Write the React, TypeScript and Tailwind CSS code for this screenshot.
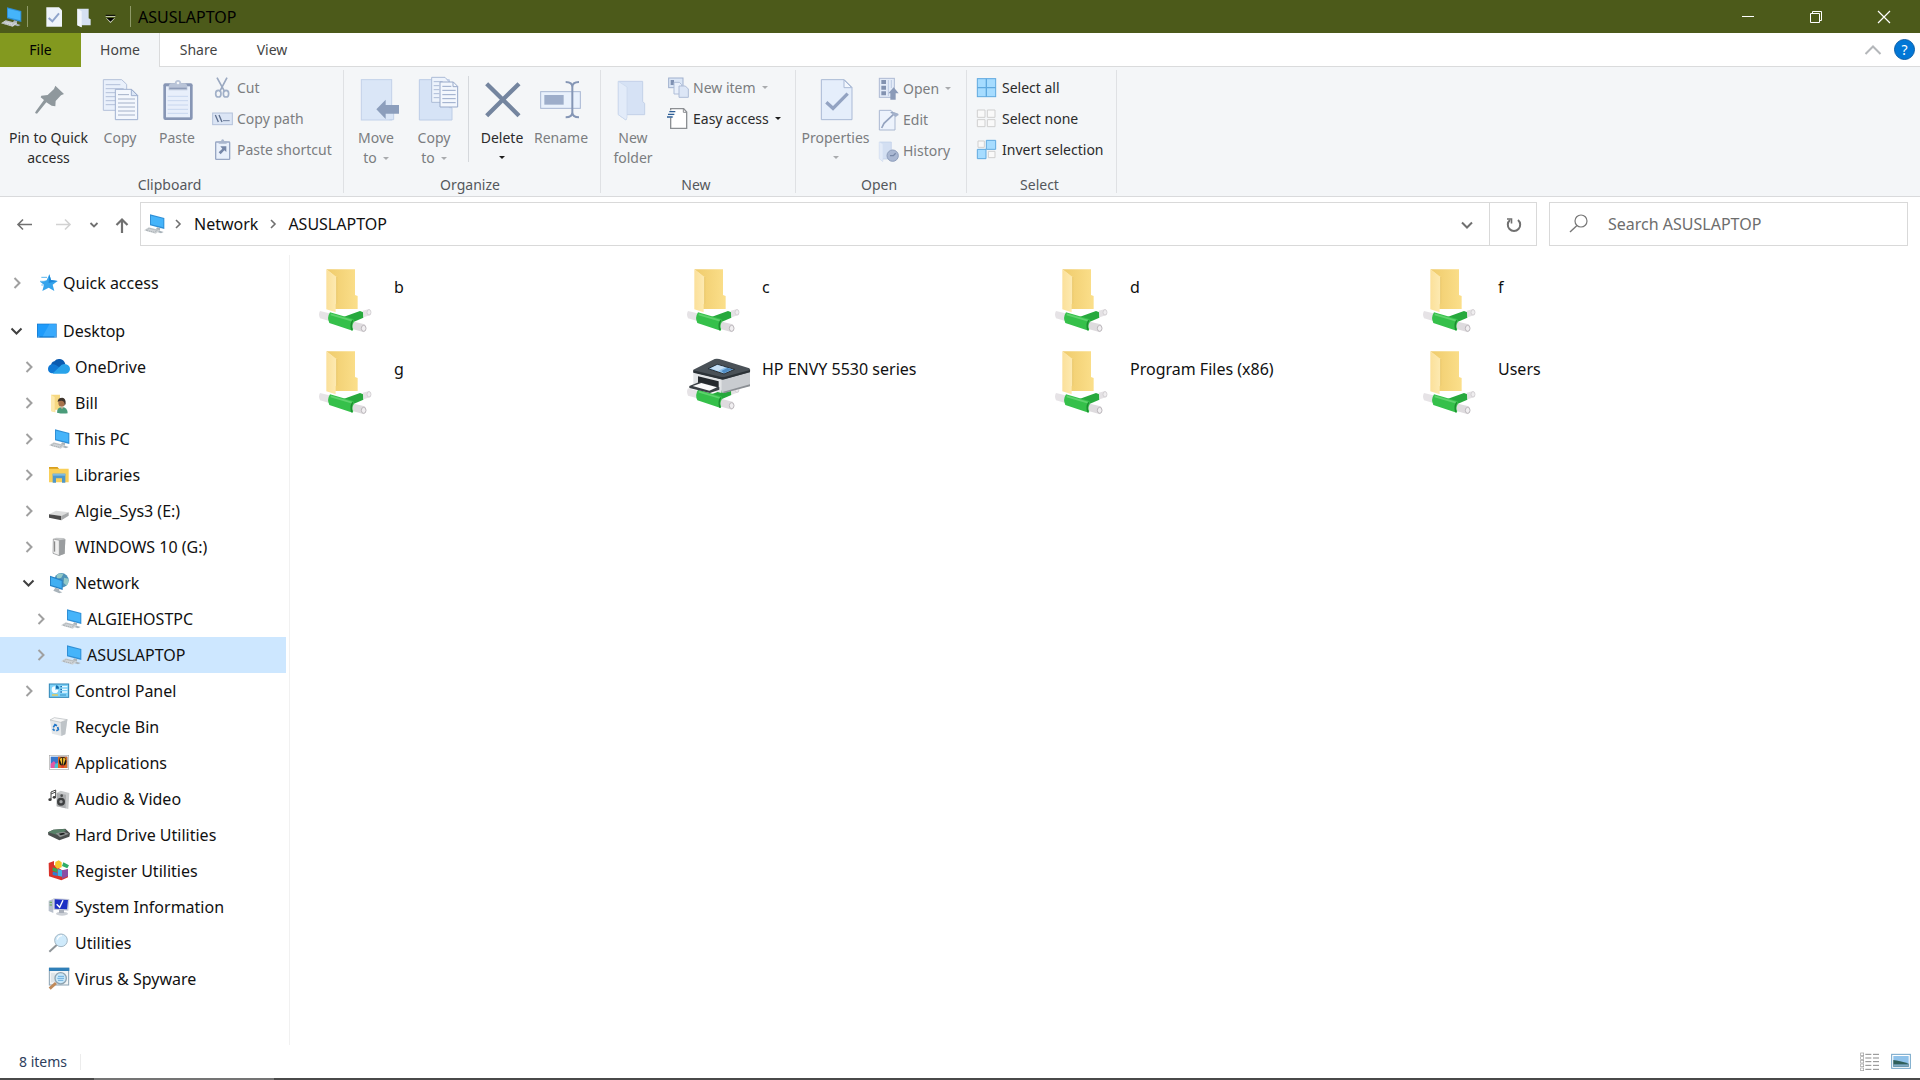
import type { ReactNode } from "react";

type Box = { vb: string; className?: string; children: ReactNode };

function Svg({ vb, className = "h-[22px] w-[22px]", children }: Box) {
  return (
    <svg viewBox={vb} className={`${className} shrink-0 overflow-visible`} fill="none" aria-hidden="true">
      {children}
    </svg>
  );
}

const BIG = "h-[42px] w-[42px]";

/* ---------- shared icons ---------- */

function ComputerIcon() {
  return (
    <Svg vb="144 505 66 66">
      <path d="M165 509 L208 520 V553 L165 542 Z" fill="#2f8fd6" />
      <path d="M168 513 L205 522 V548 L168 539 Z" fill="#45b4fa" />
      <path d="M186 548 L196 551 L194 558 L206 562 L198 566 L180 560 Z" fill="#a9b3ba" />
      <path d="M147 557 L161 548 L196 557 L182 567 Z" fill="#cfd3d6" />
      <path d="M153 557 L163 551 L187 557 L179 563 Z" stroke="#979ea3" strokeWidth="2" strokeDasharray="4 2" />
    </Svg>
  );
}

function Chevron({ open = false }: { open?: boolean }) {
  return (
    <svg viewBox="0 0 20 20" className="h-5 w-5 shrink-0" fill="none" aria-hidden="true">
      {open ? (
        <path d="M4.500 7.500 L9.500 12.500 L14.500 7.500" stroke="#404040" strokeWidth="2" />
      ) : (
        <path d="M7.500 5 L12.500 10 L7.500 15" stroke="#a0a0a0" strokeWidth="2" />
      )}
    </svg>
  );
}

function Caret({ dark = false }: { dark?: boolean }) {
  return (
    <svg viewBox="0 0 6 3" className="h-[3px] w-[6px] shrink-0" aria-hidden="true">
      <path d="M0 0 H6 L3 3 Z" fill={dark ? "#1c1c1c" : "#a9abae"} />
    </svg>
  );
}

/* ---------- ribbon icons ---------- */

const PinIcon = () => (
  <Svg vb="81 234 126 126" className={BIG}>
    <path d="M163 254 L189 279 L180 283 L164 300 L163 316 L152 314 L136 304 L108 338 L102 336 L105 330 L129 297 L119 289 L121 284 L140 282 L159 264 Z" fill="#8f989d" />
  </Svg>
);
const CopyIcon = () => (
  <Svg vb="294 234 126 126" className={BIG}>
    <path d="M307 236 H362 L377 250 V328 H307 Z" fill="#e9f0fb" stroke="#b4c1da" strokeWidth="3" />
    <path d="M314 251 H358 M314 263 H368 M314 275 H345 M314 287 H345 M314 299 H345 M314 311 H345" stroke="#b4c1da" strokeWidth="3" />
    <path d="M343 265 H392 L410 283 V356 H343 Z" fill="#f3f7fd" stroke="#9fb0cf" strokeWidth="3" />
    <path d="M391 265 V284 H410 Z" fill="#dbe6f6" stroke="#9fb0cf" strokeWidth="3" />
    <path d="M351 281 H384 M351 294 H402 M351 306 H402 M351 318 H402 M351 330 H402 M351 342 H402" stroke="#a3b0c8" strokeWidth="3" />
  </Svg>
);
const PasteIcon = () => (
  <Svg vb="468 234 126 126" className={BIG}>
    <rect x="490" y="247" width="88" height="110" rx="6" fill="#8796b5" />
    <rect x="498" y="256" width="72" height="93" fill="#e8effb" />
    <path d="M503 286 H564 M503 299 H564 M503 312 H564 M503 325 H564 M503 337 H564" stroke="#c8d6ee" strokeWidth="3" />
    <path d="M506 258 Q506 247 516 247 H524 Q526 237 534 237 Q542 237 544 247 H552 Q562 247 562 258 V268 H506 Z" fill="#b9c4d8" />
    <circle cx="534" cy="246" r="4" fill="#f4f6f8" />
    <path d="M508 262 H560" stroke="#8e9cb8" strokeWidth="4" />
  </Svg>
);
const CutIcon = () => (
  <Svg vb="633 231 66 66">
    <path d="M651 233 L674 275 M681 233 L659 275" stroke="#9aa8c0" strokeWidth="5" />
    <ellipse cx="655" cy="281" rx="8" ry="10" stroke="#a1b0c8" strokeWidth="5" />
    <ellipse cx="678" cy="281" rx="8" ry="10" stroke="#a1b0c8" strokeWidth="5" />
  </Svg>
);
const CopyPathIcon = () => (
  <Svg vb="633 324 66 66">
    <rect x="638" y="339" width="59" height="35" fill="#dbe5f5" stroke="#b3c1da" strokeWidth="3" />
    <path d="M646 345 L655 366 M657 345 L666 366" stroke="#5f708f" strokeWidth="4" />
    <path d="M669 362 H689" stroke="#6f7f9d" strokeWidth="3" />
  </Svg>
);
const PasteShortcutIcon = () => (
  <Svg vb="633 417 66 66">
    <rect x="647" y="426" width="42" height="52" rx="2" fill="#e9f0fb" stroke="#98a7c4" strokeWidth="4" />
    <path d="M656 431 V424 H663 Q664 418 668 418 Q672 418 673 424 H680 V431 Z" fill="#a9b6ce" />
    <path d="M661 439 H679 V456 L673 451 L662 463 L656 457 L667 446 Z" fill="#7687a8" />
  </Svg>
);
const MoveIcon = () => (
  <Svg vb="45 54 126 126" className={BIG}>
    <rect x="64" y="56" width="91" height="121" fill="#dae6f7" stroke="#c2d1e9" strokeWidth="3" />
    <path d="M148 140 H161 V176 H148" fill="#dae6f7" stroke="#c2d1e9" strokeWidth="3" />
    <path d="M109 145 L137 116 V132 H177 V158 H137 V174 Z" fill="#8c9ebc" />
  </Svg>
);
const CopyToIcon = () => (
  <Svg vb="219 54 126 126" className={BIG}>
    <path d="M238 56 H328 V140 H336 V177 H238 Z" fill="#d6e3f6" stroke="#bccce6" strokeWidth="3" />
    <path d="M275 49 H315 L327 62 V124 H275 Z" fill="#edf3fc" stroke="#adbcd7" strokeWidth="3" />
    <path d="M281 62 H308 M281 74 H298 M281 86 H298 M281 98 H298 M281 110 H298" stroke="#adbcd7" strokeWidth="3" />
    <path d="M300 63 H340 L353 76 V138 H300 Z" fill="#f3f7fd" stroke="#98a9c9" strokeWidth="3" />
    <path d="M339 63 V77 H353" stroke="#98a9c9" strokeWidth="3" />
    <path d="M307 76 H334 M307 88 H347 M307 101 H347 M307 113 H347 M307 125 H347" stroke="#98a9c9" strokeWidth="3" />
  </Svg>
);
const DeleteIcon = () => (
  <Svg vb="423 54 126 126" className={BIG}>
    <path d="M440 68 L537 164 M537 68 L440 164" stroke="#74859f" strokeWidth="13" />
  </Svg>
);
const RenameIcon = () => (
  <Svg vb="600 54 126 126" className={BIG}>
    <rect x="602" y="92" width="119" height="50" fill="#e9f1fc" stroke="#a7b7d3" strokeWidth="3" />
    <rect x="613" y="102" width="58" height="29" fill="#9dadca" />
    <path d="M677 63 Q697 63 697 78 V154 Q697 169 677 169 M717 63 Q697 63 697 78 M697 154 Q697 169 717 169" stroke="#8596b5" strokeWidth="6" />
  </Svg>
);
const NewFolderIcon = () => (
  <Svg vb="816 54 126 126" className={BIG}>
    <path d="M835 61 H908 V122 L914 127 V161 H858 V177 L835 161 Z" fill="#d6e2f5" stroke="#c3d1e8" strokeWidth="3" />
    <path d="M835 61 L861 78 V170 L858 177 L835 161 Z" fill="#e2ebf9" stroke="#c9d6ec" strokeWidth="2" />
  </Svg>
);
const NewItemIcon = () => (
  <Svg vb="981 51 66 66">
    <rect x="986" y="54" width="43" height="29" fill="#dbe6f6" stroke="#9fb0cd" strokeWidth="3" />
    <rect x="992" y="60" width="10" height="15" fill="#7f91b2" />
    <path d="M1002 67 H1018 L1025 74 V102 H1002 Z" fill="#e9f0fb" stroke="#afbed8" strokeWidth="3" />
    <path d="M1017 78 H1036 L1045 87 V112 H1017 Z" fill="#dce6f6" stroke="#aebcd6" strokeWidth="3" />
  </Svg>
);
const EasyAccessIcon = () => (
  <Svg vb="981 144 66 66">
    <path d="M992 146 H1031 L1040 156 V205 H992 Z" fill="#fff" stroke="#8c8f93" strokeWidth="4" />
    <path d="M1030 146 V157 H1040" stroke="#8c8f93" strokeWidth="3" />
    <rect x="983" y="151" width="18" height="22" fill="#f4f6f8" />
    <path d="M988 155 H1006 M984 163 H1003 M981 171 H998" stroke="#2e5f96" strokeWidth="4" />
  </Svg>
);
const PropertiesIcon = () => (
  <Svg vb="102 54 126 126" className={BIG}>
    <path d="M121 56 H190 L213 79 V176 H121 Z" fill="#e5eefb" stroke="#a9b9d5" strokeWidth="3" />
    <path d="M189 57 V80 H212 Z" fill="#f3f7fd" stroke="#a9b9d5" strokeWidth="3" />
    <path d="M136 124 L156 142 L200 98" stroke="#93a3c2" strokeWidth="10" />
  </Svg>
);
const OpenIcon = () => (
  <Svg vb="291 54 66 66">
    <rect x="298" y="55" width="45" height="57" fill="#e3ebf8" stroke="#adbad3" strokeWidth="3" />
    <path d="M304 60 H318 V72 H304 Z M304 77 H318 V89 H304 Z M304 94 H318 V106 H304 Z" fill="#8292b0" />
    <path d="M325 60 V108 M334 60 V84" stroke="#bccae2" strokeWidth="3" />
    <path d="M341 82 L356 100 H347 V119 H331 V100 H325 Z" fill="#8a9ab8" />
  </Svg>
);
const EditIcon = () => (
  <Svg vb="291 148 66 66">
    <path d="M298 152 H333 L345 164 V211 H298 Z" fill="#edf3fc" stroke="#a9b7d0" strokeWidth="3" />
    <path d="M305 205 L312 191 L343 162 M332 158 L355 166" stroke="#94a3bf" strokeWidth="5" />
    <path d="M341 157 L355 162 L348 173 L337 164 Z" fill="#a3b1ca" />
  </Svg>
);
const HistoryIcon = () => (
  <Svg vb="291 241 66 66">
    <path d="M298 247 H334 V298 H308 V305 L298 297 Z" fill="#d3dff2" stroke="#c0cfe8" strokeWidth="2" />
    <path d="M298 247 L308 254 V305 L298 297 Z" fill="#e3ebf8" />
    <circle cx="338" cy="288" r="17" fill="#a9b7d2" stroke="#8d9dbb" strokeWidth="3" />
    <path d="M330 288 H340 L347 281" stroke="#7788a8" strokeWidth="4" />
  </Svg>
);
const SelectAllIcon = () => (
  <Svg vb="588 51 66 66">
    <rect x="592" y="56" width="55" height="54" fill="#a6dcff" stroke="#5fa9df" strokeWidth="3" />
    <path d="M619 56 V110 M592 83 H647" stroke="#5fa9df" strokeWidth="4" />
  </Svg>
);
const SelectNoneIcon = () => (
  <Svg vb="588 144 66 66">
    <path d="M592 150 H615 V172 H592 Z M622 150 H645 V172 H622 Z M592 179 H615 V200 H592 Z M622 179 H645 V200 H622 Z" fill="#f9f9f9" stroke="#cfcfcf" strokeWidth="3" />
  </Svg>
);
const InvertIcon = () => (
  <Svg vb="588 237 66 66">
    <path d="M594 243 H613 V262 H594 Z M625 274 H645 V293 H625 Z" fill="#f9f9f9" stroke="#cfcfcf" strokeWidth="3" />
    <path d="M619 241 H647 V268 H619 Z M592 268 H618 V296 H592 Z" fill="#a6dcff" stroke="#5fa9df" strokeWidth="3" />
  </Svg>
);

/* ---------- navigation icons ---------- */

const StarIcon = () => (
  <Svg vb="108 37 66 66">
    <path d="M148 44 L153 61 L173 64 L158 75 L163 94 L146 84 L127 94 L132 75 L121 67 L140 62 Z" fill="#35a4ec" />
    <path d="M124 53 H141 M120 65 H134 M124 76 H131" stroke="#5db6ee" strokeWidth="3" />
    <path d="M148 44 L146 70 L173 64 L153 61 Z" fill="#1d87d8" />
  </Svg>
);
const DesktopIcon = () => (
  <Svg vb="108 181 66 66">
    <rect x="111" y="192" width="59" height="42" fill="#1677c8" />
    <rect x="113" y="194" width="55" height="36" fill="#1e9bfb" />
    <path d="M148 194 H168 V230 H128 Z" fill="#38a9fc" />
    <path d="M113 232 H168" stroke="#bfe0f8" strokeWidth="2" strokeDasharray="5 45" />
  </Svg>
);
const OneDriveIcon = () => (
  <Svg vb="144 289 66 66">
    <path d="M153 320 Q153 307 163 305 Q170 296 180 298 Q192 300 196 313 L176 332 Z" fill="#0a5bb0" />
    <path d="M155 341 Q144 338 144 327 Q145 316 156 314 Q165 312 171 318 L196 335 Z" fill="#0f78d4" />
    <path d="M178 322 Q186 311 198 314 Q210 317 210 329 Q209 341 197 342 H157 Z" fill="#29a3ea" />
  </Svg>
);
const UserIcon = () => (
  <Svg vb="144 397 66 66">
    <path d="M153 405 H180 V450 H166 V458 L153 454 Z" fill="#f6d882" />
    <path d="M153 405 L164 412 V458 L153 454 Z" fill="#fde9ac" />
    <ellipse cx="185" cy="429" rx="10" ry="12" fill="#a8724b" />
    <path d="M173 427 Q173 414 187 414 Q198 415 197 432 L194 438 Q195 424 185 423 Q177 423 173 427 Z" fill="#3f352d" />
    <path d="M171 459 Q171 443 186 442 Q203 443 203 461 Q187 463 171 459 Z" fill="#4a9c7a" />
    <path d="M181 441 L186 449 L191 441 Z" fill="#c9b29a" />
  </Svg>
);
const LibrariesIcon = () => (
  <Svg vb="144 613 66 66">
    <path d="M147 622 H172 L177 627 H206 V668 H147 Z" fill="#f9d05a" />
    <path d="M147 622 H172 L177 627 H147 Z" fill="#d99f1d" />
    <path d="M158 642 H196 V669 H186 V656 H168 V669 H158 Z" fill="#4f97c9" />
    <path d="M158 642 H196 V648 H158 Z" fill="#7fbbe0" />
  </Svg>
);
const DriveIcon = () => (
  <Svg vb="144 721 66 66">
    <path d="M147 764 L168 753 L206 758 L184 770 Z" fill="#dcdddd" />
    <path d="M147 764 L184 769 V782 L147 774 Z" fill="#4b4b4b" />
    <path d="M184 769 L206 758 V768 L184 782 Z" fill="#a7a9aa" />
  </Svg>
);
const UsbIcon = () => (
  <Svg vb="144 -11 66 66">
    <path d="M160 -2 L168 -6 L192 -5 L196 -1 L194 42 L178 48 L159 41 Z" fill="#c4c6c7" />
    <path d="M160 -2 L178 2 V48 L159 41 Z" fill="#f0f0f0" stroke="#8e9091" strokeWidth="2" />
    <path d="M178 2 L196 -1 L194 42 L178 48 Z" fill="#9a9d9f" />
    <path d="M164 5 V36" stroke="#777" strokeWidth="3" />
  </Svg>
);
const NetworkIcon = () => (
  <Svg vb="144 97 66 66">
    <circle cx="184" cy="122" r="22" fill="#4f93b8" />
    <path d="M170 106 Q180 99 190 103 L184 114 L171 117 Z M192 114 L205 117 Q207 130 200 138 L191 130 Z" fill="#93c9c8" />
    <path d="M150 108 L188 121 V151 L150 139 Z" fill="#2783c6" />
    <path d="M153 113 L185 124 V146 L153 136 Z" fill="#41aff2" />
    <path d="M166 144 L178 148 V154 L187 158 L178 161 L160 153 Z" fill="#a9b3ba" />
  </Svg>
);
const ControlPanelIcon = () => (
  <Svg vb="144 421 66 66">
    <rect x="148" y="433" width="58" height="40" fill="#7ed1f7" stroke="#2d84b5" strokeWidth="3" />
    <path d="M165 440 A10 10 0 1 0 175 450 H165 Z" fill="#f5fbff" />
    <path d="M168 437 A10 10 0 0 1 177 447 H168 Z" fill="#1669a8" />
    <path d="M182 441 H202 M182 449 H202 M182 457 H202" stroke="#e9f8ff" strokeWidth="4" />
    <path d="M181 441 H186 M181 449 H186 M181 457 H186" stroke="#1a6fb0" strokeWidth="4" />
    <path d="M156 466 H174" stroke="#f0c848" strokeWidth="4" />
    <path d="M180 466 H198" stroke="#4aa2d2" strokeWidth="4" />
  </Svg>
);
const RecycleIcon = () => (
  <Svg vb="144 529 66 66">
    <path d="M150 541 L163 534 L202 540 L196 584 L184 589 L156 582 Z" fill="#e4e7e9" />
    <path d="M182 548 L202 540 L196 584 L184 589 Z" fill="#bfc4c8" />
    <path d="M150 541 L163 534 L202 540 L182 548 Z" fill="#f7f7f7" stroke="#b5babd" strokeWidth="2" />
    <path d="M160 563 L165 555 L171 558 M173 562 L175 570 L169 573 M164 573 L158 568" stroke="#1f75c8" strokeWidth="5" />
  </Svg>
);
const ApplicationsIcon = () => (
  <Svg vb="144 637 66 66">
    <rect x="148" y="647" width="58" height="42" fill="#fff" stroke="#a8a8a8" strokeWidth="2" />
    <rect x="152" y="651" width="50" height="34" fill="#3877cd" />
    <path d="M152 672 L162 664 L176 685 H152 Z" fill="#e356a4" />
    <path d="M164 674 L176 668 V685 H164 Z" fill="#4ac3d2" />
    <rect x="174" y="651" width="28" height="34" fill="#d96a24" />
    <ellipse cx="188" cy="665" rx="11" ry="13" fill="#1c1512" />
    <path d="M179 658 Q188 650 197 658 L190 676 H186 Z" fill="#f6c22e" />
    <path d="M188 654 V676" stroke="#1c1512" strokeWidth="3" />
    <rect x="184" y="677" width="8" height="7" fill="#e0392a" />
  </Svg>
);
const AudioIcon = () => (
  <Svg vb="144 745 66 66">
    <path d="M153 779 V757 L167 751 V772 M153 763 L167 757" stroke="#4a4a4a" strokeWidth="3" />
    <ellipse cx="150" cy="780" rx="5" ry="4" fill="#3b3b3b" />
    <ellipse cx="163" cy="773" rx="5" ry="4" fill="#3b3b3b" />
    <path d="M170 760 L182 753 L208 760 L205 808 L170 800 Z" fill="#c9cbcc" />
    <path d="M170 760 L198 765 L197 806 L170 800 Z" fill="#aaacae" />
    <circle cx="183" cy="786" r="12" fill="#3d3f40" />
    <circle cx="183" cy="786" r="5" fill="#a3a5a6" />
    <circle cx="185" cy="768" r="4" fill="#4b4d4e" />
  </Svg>
);
const HardDriveIcon = () => (
  <Svg vb="144 73 66 66">
    <path d="M144 98 L160 90 L196 87 L210 101 L208 111 L178 122 L145 106 Z" fill="#4b4f4e" />
    <path d="M144 98 L160 90 L193 88 L198 94 L170 105 Z" fill="#588168" />
    <path d="M167 101 L190 96 L207 102 L180 113 Z" fill="#8d9291" />
    <path d="M176 102 L190 99 L196 103 L182 107 Z" fill="#1f2221" />
  </Svg>
);
const RegistryIcon = () => (
  <Svg vb="144 181 66 66">
    <path d="M146 190 L162 184 V196 L190 214 L204 209 V233 L184 242 L147 230 Z" fill="#d9322a" />
    <path d="M166 187 L176 182 L185 188 V203 L172 207 L165 200 Z" fill="#f6c52b" />
    <path d="M158 203 L172 207 V218 L158 214 Z" fill="#35a853" />
    <path d="M158 216 L172 219 V229 L158 226 Z" fill="#2f7fd2" />
    <path d="M173 208 L186 212 V231 L173 228 Z" fill="#3fb4e6" />
    <path d="M186 212 L204 208 V230 L186 237 Z" fill="#8a4fa5" />
    <path d="M190 188 L207 197 L202 206 L186 199 Z" fill="#2fae68" />
  </Svg>
);
const SystemInfoIcon = () => (
  <Svg vb="144 289 66 66">
    <path d="M146 303 L160 298 V340 L146 334 Z" fill="#b8c0cc" />
    <path d="M149 308 H156 M149 316 H156" stroke="#5fae49" strokeWidth="3" />
    <path d="M160 296 L208 298 L205 333 L160 330 Z" fill="#c6cad6" />
    <path d="M164 299 L204 301 L201 329 L164 327 Z" fill="#1c2fc4" />
    <path d="M170 314 L179 323 L189 302" stroke="#fff" strokeWidth="4" />
    <ellipse cx="186" cy="342" rx="18" ry="6" fill="#ccd0d6" />
    <path d="M177 331 H192 V340 H177 Z" fill="#a9afba" />
  </Svg>
);
const MagnifierIcon = () => (
  <Svg vb="144 397 66 66">
    <path d="M148 456 L170 436" stroke="#8f9599" strokeWidth="6" />
    <circle cx="183" cy="422" r="19" fill="#cfeafb" stroke="#a2b6c4" strokeWidth="3" />
    <path d="M172 420 Q174 409 186 408" stroke="#fff" strokeWidth="4" />
  </Svg>
);
const SpywareIcon = () => (
  <Svg vb="144 505 66 66">
    <rect x="148" y="506" width="58" height="50" fill="#f3f5f6" stroke="#8aa2b3" strokeWidth="3" />
    <path d="M147 504 H208 V514 H147 Z" fill="#2f7fb8" />
    <path d="M153 520 H166 V548 H153 Z" fill="#dfe5e8" />
    <path d="M149 567 L168 550" stroke="#c08a5a" strokeWidth="9" />
    <circle cx="182" cy="536" r="17" fill="#c9e8f9" stroke="#8fa3b0" strokeWidth="4" />
    <path d="M174 530 H192 M172 536 H192 M174 542 H190" stroke="#6aaede" strokeWidth="3" />
  </Svg>
);

/* ---------- tile icons ---------- */

function Pipe() {
  return (
    <>
      <path d="M130 186 L180 168 L190 172 V188 L162 200 L150 200 Z" fill="#27a93d" />
      <path d="M188 167 L208 162 Q216 168 212 180 L191 187 Z" fill="#e4e1e4" />
      <ellipse cx="207" cy="172" rx="6" ry="8" fill="#efedef" stroke="#c9c5c9" strokeWidth="2" />
      <path d="M60 168 L88 175 V198 L60 190 Q54 178 60 168 Z" fill="#e6e3e6" />
      <path d="M90 172 L160 192 Q168 206 158 227 L88 204 Q80 188 90 172 Z" fill="#35c04a" />
      <path d="M92 178 L156 197" stroke="#5fd26d" strokeWidth="5" />
      <path d="M158 196 Q150 210 156 226" stroke="#1c8a30" strokeWidth="4" />
      <path d="M162 200 L194 208 Q204 218 192 232 L160 223 Q154 212 162 200 Z" fill="#dedbde" />
      <ellipse cx="191" cy="220" rx="7" ry="9" fill="#f1eff1" stroke="#bcb8bc" strokeWidth="3" />
    </>
  );
}

const SharedFolderIcon = () => (
  <Svg vb="54 30 192 210" className="h-[70px] w-[64px]">
    <defs>
      <linearGradient id="folderBack" x1="0" y1="0" x2="1" y2="0">
        <stop offset="0" stopColor="#efcb6b" />
        <stop offset="1" stopColor="#fbdf8b" />
      </linearGradient>
      <linearGradient id="folderFront" x1="0" y1="0" x2="1" y2="0">
        <stop offset="0" stopColor="#fbe09a" />
        <stop offset="1" stopColor="#fdeab2" />
      </linearGradient>
    </defs>
    <path d="M79 43 H165 V120 L173 123 V162 H100 V60 Z" fill="url(#folderBack)" />
    <path d="M79 43 L110 66 V144 L107 148 V172 L79 163 Z" fill="url(#folderFront)" />
    <path d="M110 66 V146" stroke="#e3be5c" strokeWidth="2" />
    <Pipe />
  </Svg>
);

const PrinterIcon = () => (
  <Svg vb="48 276 192 210" className="h-[70px] w-[64px]">
    <g transform="translate(-6 232)">
      <Pipe />
    </g>
    <path d="M70 350 L154 370 V414 L70 390 Z" fill="#e2e4e6" />
    <path d="M154 370 L240 350 V392 L160 414 L154 412 Z" fill="#c9ccd0" />
    <path d="M160 410 L240 388 V394 L160 415 Z" fill="#8b8f94" />
    <path d="M70 344 L134 312 Q140 310 148 312 L238 340 Q242 343 240 352 L164 372 Q158 374 152 372 L70 352 Z" fill="#4a5157" />
    <path d="M70 346 L154 366 Q160 367 166 365 L240 345 V351 L164 373 Q158 375 152 373 L70 353 Z" fill="#2c3237" />
    <path d="M114 341 L142 328 L194 343 L162 357 Z" fill="#8fc1ea" stroke="#2a3036" strokeWidth="3" />
    <path d="M122 340 L142 330 L166 337 L144 348 Z" fill="#c8e0f5" />
    <path d="M154 348 L172 339 L188 343 L162 355 Z" fill="#4f8cc4" />
    <path d="M84 364 L146 379 V400 L84 386 Z" fill="#24282c" />
    <path d="M58 393 L88 381 L148 397 V404 L120 414 L58 399 Z" fill="#3a3f44" />
    <path d="M68 393 L94 384 L141 397 L118 407 Z" fill="#fbfbfb" />
  </Svg>
);

/* ---------- ribbon pieces ---------- */

type BigProps = { icon: ReactNode; lines: string[]; width: string; active?: boolean; caret?: "inline" | "below" };

function BigButton({ icon, lines, width, active = false, caret }: BigProps) {
  return (
    <button
      type="button"
      className={`${width} flex shrink-0 flex-col items-center pt-3 ${active ? "text-[#2b2b2b]" : "text-[#7b7d80]"}`}
    >
      {icon}
      <span className="mt-[7px] flex flex-col items-center whitespace-nowrap leading-5">
        {lines.map((l, i) => (
          <span key={l} className="flex items-center gap-1.5">
            {l}
            {caret === "inline" && i === lines.length - 1 && <Caret dark={active} />}
          </span>
        ))}
        {caret === "below" && (
          <span className="flex h-[18px] items-center">
            <Caret dark={active} />
          </span>
        )}
      </span>
    </button>
  );
}

type SmallProps = { icon: ReactNode; label: string; active?: boolean; caret?: boolean };

function SmallButton({ icon, label, active = false, caret = false }: SmallProps) {
  return (
    <button
      type="button"
      className={`flex h-[31px] items-center gap-1 whitespace-nowrap ${active ? "text-[#2b2b2b]" : "text-[#7b7d80]"}`}
    >
      {icon}
      {label}
      {caret && (
        <span className="ml-0.5">
          <Caret dark={active} />
        </span>
      )}
    </button>
  );
}

function Group({ title, width, children }: { title: string; width: string; children: ReactNode }) {
  return (
    <section aria-label={title} className={`${width} flex shrink-0 flex-col`}>
      <div className="flex h-[108px]">{children}</div>
      <div className="pr-1 text-center leading-5 text-[#54585c]">{title}</div>
    </section>
  );
}

const Divider = () => <div className="my-[3px] w-px shrink-0 bg-[#dfe1e4]" />;

/* ---------- data ---------- */

type NavEntry = { label: string; level: 0 | 1 | 2; icon: ReactNode; state: "open" | "closed" | "leaf"; selected?: boolean };

const NAV: NavEntry[] = [
  { label: "Desktop", level: 0, icon: <DesktopIcon />, state: "open" },
  { label: "OneDrive", level: 1, icon: <OneDriveIcon />, state: "closed" },
  { label: "Bill", level: 1, icon: <UserIcon />, state: "closed" },
  { label: "This PC", level: 1, icon: <ComputerIcon />, state: "closed" },
  { label: "Libraries", level: 1, icon: <LibrariesIcon />, state: "closed" },
  { label: "Algie_Sys3 (E:)", level: 1, icon: <DriveIcon />, state: "closed" },
  { label: "WINDOWS 10 (G:)", level: 1, icon: <UsbIcon />, state: "closed" },
  { label: "Network", level: 1, icon: <NetworkIcon />, state: "open" },
  { label: "ALGIEHOSTPC", level: 2, icon: <ComputerIcon />, state: "closed" },
  { label: "ASUSLAPTOP", level: 2, icon: <ComputerIcon />, state: "closed", selected: true },
  { label: "Control Panel", level: 1, icon: <ControlPanelIcon />, state: "closed" },
  { label: "Recycle Bin", level: 1, icon: <RecycleIcon />, state: "leaf" },
  { label: "Applications", level: 1, icon: <ApplicationsIcon />, state: "leaf" },
  { label: "Audio & Video", level: 1, icon: <AudioIcon />, state: "leaf" },
  { label: "Hard Drive Utilities", level: 1, icon: <HardDriveIcon />, state: "leaf" },
  { label: "Register Utilities", level: 1, icon: <RegistryIcon />, state: "leaf" },
  { label: "System Information", level: 1, icon: <SystemInfoIcon />, state: "leaf" },
  { label: "Utilities", level: 1, icon: <MagnifierIcon />, state: "leaf" },
  { label: "Virus & Spyware", level: 1, icon: <SpywareIcon />, state: "leaf" },
];

const INDENT = ["pl-[7px]", "pl-[19px]", "pl-[31px]"];

function NavRow({ entry }: { entry: NavEntry }) {
  return (
    <button
      type="button"
      className={`flex h-9 w-full items-center whitespace-nowrap text-left ${INDENT[entry.level]} ${entry.selected ? "bg-[#cde7ff]" : ""}`}
    >
      {entry.state === "leaf" ? <span className="w-5 shrink-0" /> : <Chevron open={entry.state === "open"} />}
      <span className="ml-[9px] mr-[5px] shrink-0">{entry.icon}</span>
      {entry.label}
    </button>
  );
}

const ITEMS = ["b", "c", "d", "f", "g", "HP ENVY 5530 series", "Program Files (x86)", "Users"];

/* ---------- window sections ---------- */

function TitleBar() {
  return (
    <header className="flex h-[33px] items-center bg-[#4c5a1a] text-black">
      <div className="flex w-[27px]">
        <ComputerIcon />
      </div>
      <div className="h-[21px] w-px bg-[#8f9a68]" />
      <button type="button" aria-label="Properties" className="ml-[15px]">
        <Svg vb="129 18 66 66">
          <path d="M139 22 H177 L186 31 V80 H139 Z" fill="#eef3fa" />
          <path d="M146 54 L157 64 L177 40" stroke="#8fa4cb" strokeWidth="6" />
        </Svg>
      </button>
      <button type="button" aria-label="New folder" className="ml-[7px]">
        <Svg vb="216 18 66 66">
          <path d="M232 26 H266 V55 L272 58 V76 H245 V82 L232 76 Z" fill="#d5e0f2" />
          <path d="M232 26 L245 34 V82 L232 76 Z" fill="#f1f5fb" />
        </Svg>
      </button>
      <button type="button" aria-label="Customize Quick Access Toolbar" className="ml-[5px]">
        <Svg vb="297 18 66 66">
          <path d="M317 49 H346" stroke="#d8dcc8" strokeWidth="3" />
          <path d="M317 46 H346" stroke="#000" strokeWidth="3" />
          <path d="M318 55 H345 L331.500 69 Z" fill="#d8dcc8" />
          <path d="M320 54 H343 L331.500 65 Z" fill="#000" />
        </Svg>
      </button>
      <div className="ml-[9px] h-[21px] w-px bg-[#8f9a68]" />
      <h1 className="ml-[7px] flex-1 text-base">ASUSLAPTOP</h1>
      <div className="mr-[2px] flex h-full">
        <button type="button" aria-label="Minimize" className="flex w-[68px] items-center justify-center">
          <Svg vb="0 0 12 12" className="h-3 w-3">
            <path d="M0 5.500 H12" stroke="#fff" />
          </Svg>
        </button>
        <button type="button" aria-label="Restore" className="flex w-[68px] items-center justify-center">
          <Svg vb="0 0 12 12" className="h-3 w-3">
            <path d="M0.500 2.500 H9.500 V11.500 H0.500 Z M2.500 2.500 V0.500 H11.500 V9.500 H9.500" stroke="#fff" />
          </Svg>
        </button>
        <button type="button" aria-label="Close" className="flex w-[68px] items-center justify-center">
          <Svg vb="0 0 12 12" className="h-3 w-3">
            <path d="M0 0 L12 12 M12 0 L0 12" stroke="#fff" strokeWidth="1.200" />
          </Svg>
        </button>
      </div>
    </header>
  );
}

function Tabs() {
  return (
    <nav className="flex h-[34px] bg-white text-sm text-[#444]">
      <button type="button" className="w-[81px] bg-[#83991f] text-black">File</button>
      <button type="button" className="w-[79px] border-r border-[#dadbdc] bg-[#f4f6f8]">Home</button>
      <button type="button" className="w-[77px] border-b border-[#dadbdc] pt-px">Share</button>
      <button type="button" className="w-[70px] border-b border-[#dadbdc] pt-px">View</button>
      <div className="flex flex-1 items-center justify-end gap-3 border-b border-[#dadbdc] pr-[5px]">
        <button type="button" aria-label="Collapse the ribbon">
          <Svg vb="0 0 18 18" className="h-[18px] w-[18px]">
            <path d="M1.500 13 L9 5.500 L16.500 13" stroke="#b4b7ba" strokeWidth="2" />
          </Svg>
        </button>
        <button
          type="button"
          aria-label="Help"
          className="flex h-[21px] w-[21px] items-center justify-center rounded-full border border-[#0b5ea8] bg-[#0277d6] text-sm leading-none text-white"
        >
          ?
        </button>
      </div>
    </nav>
  );
}

function Ribbon() {
  return (
    <div className="flex h-[130px] border-b border-[#d9dadc] bg-[#f4f6f8] text-sm">
      <Group title="Clipboard" width="w-[343px]">
        <BigButton icon={<PinIcon />} lines={["Pin to Quick", "access"]} width="w-[97px]" active />
        <BigButton icon={<CopyIcon />} lines={["Copy"]} width="w-[46px]" />
        <BigButton icon={<PasteIcon />} lines={["Paste"]} width="w-[68px]" />
        <div className="flex flex-col items-start pt-[5px]">
          <SmallButton icon={<CutIcon />} label="Cut" />
          <SmallButton icon={<CopyPathIcon />} label="Copy path" />
          <SmallButton icon={<PasteShortcutIcon />} label="Paste shortcut" />
        </div>
      </Group>
      <Divider />
      <Group title="Organize" width="w-[256px]">
        <div className="flex pl-[3px]">
          <BigButton icon={<MoveIcon />} lines={["Move", "to"]} width="w-[58px]" caret="inline" />
          <BigButton icon={<CopyToIcon />} lines={["Copy", "to"]} width="w-[58px]" caret="inline" />
          <div className="ml-[5px] mt-[9px] h-[86px] w-px bg-[#d5d8dc]" />
          <BigButton icon={<DeleteIcon />} lines={["Delete"]} width="w-[66px]" active caret="below" />
          <BigButton icon={<RenameIcon />} lines={["Rename"]} width="w-[52px]" />
        </div>
      </Group>
      <Divider />
      <Group title="New" width="w-[194px]">
        <BigButton icon={<NewFolderIcon />} lines={["New", "folder"]} width="w-[64px]" />
        <div className="ml-0.5 flex flex-col items-start pt-[5px]">
          <SmallButton icon={<NewItemIcon />} label="New item" caret />
          <SmallButton icon={<EasyAccessIcon />} label="Easy access" active caret />
        </div>
      </Group>
      <Divider />
      <Group title="Open" width="w-[170px]">
        <BigButton icon={<PropertiesIcon />} lines={["Properties"]} width="w-[79px]" caret="below" />
        <div className="ml-0.5 flex flex-col items-start pt-[6px]">
          <SmallButton icon={<OpenIcon />} label="Open" caret />
          <SmallButton icon={<EditIcon />} label="Edit" />
          <SmallButton icon={<HistoryIcon />} label="History" />
        </div>
      </Group>
      <Divider />
      <Group title="Select" width="w-[149px]">
        <div className="ml-[9px] flex flex-col items-start pt-[5px]">
          <SmallButton icon={<SelectAllIcon />} label="Select all" active />
          <SmallButton icon={<SelectNoneIcon />} label="Select none" active />
          <SmallButton icon={<InvertIcon />} label="Invert selection" active />
        </div>
      </Group>
      <Divider />
    </div>
  );
}

function CrumbArrow() {
  return (
    <svg viewBox="0 0 18 18" className="h-[18px] w-[18px]" fill="none" aria-hidden="true">
      <path d="M7 5 L11 9 L7 13" stroke="#707070" strokeWidth="1.600" />
    </svg>
  );
}

function AddressRow() {
  return (
    <div className="flex items-center pb-[9px] pr-3 pt-[5px]">
      <div className="flex w-[140px] shrink-0 items-center pl-[14px]">
        <button type="button" aria-label="Back">
          <Svg vb="0 0 22 22">
            <path d="M18 11.500 H4 M9 6.500 L4 11.500 L9 16.500" stroke="#707070" strokeWidth="1.600" />
          </Svg>
        </button>
        <button type="button" aria-label="Forward" className="ml-[17px]">
          <Svg vb="0 0 22 22">
            <path d="M3 11.500 H17 M12 6.500 L17 11.500 L12 16.500" stroke="#d2d2d2" strokeWidth="1.600" />
          </Svg>
        </button>
        <button type="button" aria-label="Recent locations" className="ml-2">
          <Svg vb="0 0 22 22">
            <path d="M7.500 10 L11 13.500 L14.500 10" stroke="#707070" strokeWidth="1.800" />
          </Svg>
        </button>
        <button type="button" aria-label="Up" className="ml-[6px]">
          <Svg vb="0 0 22 22">
            <path d="M11 20 V7 M5.500 12 L11 6.500 L16.500 12" stroke="#707070" strokeWidth="2.200" />
          </Svg>
        </button>
      </div>
      <div className="flex h-11 flex-1 items-center border border-[#d9d9d9]">
        <span className="ml-[2px]">
          <ComputerIcon />
        </span>
        <span className="ml-1 flex">
          <CrumbArrow />
        </span>
        <button type="button" className="ml-[7px]">Network</button>
        <span className="ml-[6px] flex">
          <CrumbArrow />
        </span>
        <button type="button" className="ml-[6px]">ASUSLAPTOP</button>
        <div className="flex-1" />
        <button type="button" aria-label="Previous locations" className="flex w-[44px] items-center justify-center">
          <Svg vb="0 0 22 22">
            <path d="M6 9.500 L11 14.500 L16 9.500" stroke="#707070" strokeWidth="2" />
          </Svg>
        </button>
        <button
          type="button"
          aria-label="Refresh"
          className="flex h-full w-[47px] items-center justify-center border-l border-[#d9d9d9]"
        >
          <Svg vb="0 0 22 22">
            <path d="M8 7 A6.200 6.200 0 1 0 16 7" stroke="#707070" strokeWidth="2" />
            <path d="M5 6 H9.500 V10.500" stroke="#707070" strokeWidth="1.600" />
          </Svg>
        </button>
      </div>
      <label className="ml-3 flex h-11 w-[359px] items-center border border-[#d9d9d9]">
        <span className="ml-[18px]">
          <Svg vb="0 0 22 22">
            <circle cx="13" cy="8" r="6" stroke="#777" strokeWidth="1.200" />
            <path d="M9 12.500 L2 19" stroke="#777" strokeWidth="1.400" />
          </Svg>
        </span>
        <input
          type="text"
          aria-label="Search ASUSLAPTOP"
          placeholder="Search ASUSLAPTOP"
          className="ml-[18px] min-w-0 flex-1 bg-transparent outline-none placeholder:text-[#6d6d6d]"
        />
      </label>
    </div>
  );
}

function StatusBar() {
  return (
    <footer className="flex h-[33px] items-center pl-[19px] pr-2 text-[#2d3e5c]">
      <span className="pt-px text-sm">8 items</span>
      <span className="ml-[13px] h-4 w-px bg-[#ececec]" />
      <div className="flex-1" />
      <button type="button" aria-label="Details view" className="mr-[9px]">
        <Svg vb="237 63 66 66">
          {[71, 82, 93, 104, 116].map((y) => (
            <g key={y}>
              <rect x="242" y={y - 2} width="9" height="8" stroke="#9a9a9a" strokeWidth="2" />
              <path d={`M256 ${y + 2} H274 M279 ${y + 2} H297`} stroke="#8a8a8a" strokeWidth="3" />
            </g>
          ))}
        </Svg>
      </button>
      <button type="button" aria-label="Large thumbnails view">
        <Svg vb="327 63 66 66">
          <rect x="332" y="73" width="56" height="42" fill="#fff" stroke="#6fa3c7" strokeWidth="3" />
          <rect x="337" y="78" width="46" height="32" fill="#8fc2ea" />
          <path d="M337 90 Q355 92 383 101 V110 H337 Z" fill="#2f5f5a" />
          <path d="M337 103 H383 V110 H337 Z" fill="#7ea9c4" />
        </Svg>
      </button>
    </footer>
  );
}

export default function App() {
  return (
    <div className="flex min-h-screen flex-col bg-white font-['Noto_Sans',sans-serif] text-base text-[#111]">
      <TitleBar />
      <Tabs />
      <Ribbon />
      <AddressRow />
      <div className="flex flex-1">
        <aside className="w-[290px] shrink-0 border-r border-[#f1f1f1] pr-[3px] pt-[10px]">
          <div className="mb-3">
            <NavRow entry={{ label: "Quick access", level: 0, icon: <StarIcon />, state: "closed" }} />
          </div>
          {NAV.map((n) => (
            <NavRow key={n.label} entry={n} />
          ))}
        </aside>
        <main className="grid flex-1 auto-rows-[82px] grid-cols-[repeat(auto-fill,368px)] content-start pl-[28px] pt-[10px]">
          {ITEMS.map((name) => (
            <button key={name} type="button" className="flex items-start gap-3 text-left">
              {name.startsWith("HP") ? <PrinterIcon /> : <SharedFolderIcon />}
              <span className="mt-[10px] leading-6">{name}</span>
            </button>
          ))}
        </main>
      </div>
      <StatusBar />
      <div className="flex h-[2px] bg-[#4a4a4a]">
        <div className="ml-[94px] w-[180px] bg-[#747474]" />
      </div>
    </div>
  );
}
